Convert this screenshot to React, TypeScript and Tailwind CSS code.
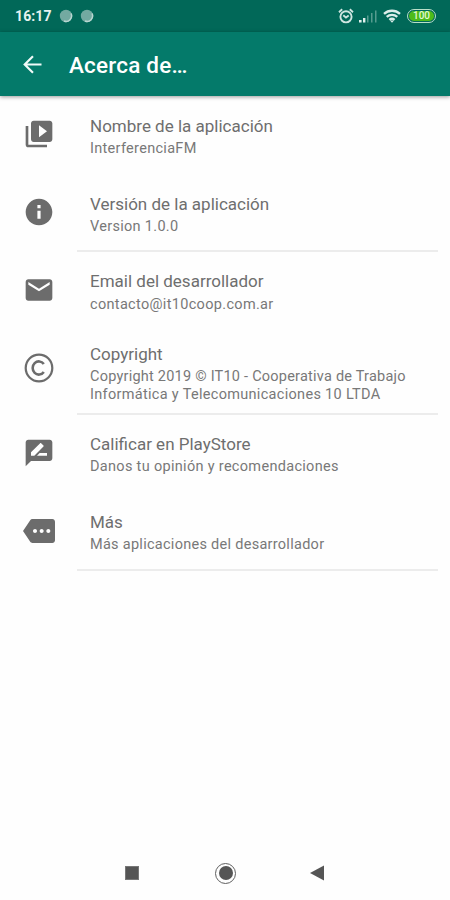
import type { ReactNode } from "react";

const icons = {
  library:
    "M4 6H2v14c0 1.100.9 2 2 2h14v-2H4V6zm16-4H8c-1.100 0-2 .9-2 2v12c0 1.100.9 2 2 2h12c1.100 0 2-.9 2-2V4c0-1.100-.9-2-2-2zm-8 12.500v-9l6 4.500-6 4.500z",
  info: "M12 2C6.480 2 2 6.480 2 12s4.480 10 10 10 10-4.480 10-10S17.520 2 12 2zm1.200 15h-2.400v-6h2.400v6zm0-7.800h-2.400V6.800h2.400v2.400z",
  mail: "M20 4H4c-1.100 0-2 .9-2 2v12c0 1.100.9 2 2 2h16c1.100 0 2-.9 2-2V6c0-1.100-.9-2-2-2zm0 4l-8 5-8-5V6l8 5 8-5v2z",
  review:
    "M20 2H4c-1.100 0-2 .9-2 2v18l4-4h14c1.100 0 2-.9 2-2V4c0-1.100-.9-2-2-2zM6 14v-2.470l6.880-6.880c.2-.2.510-.2.710 0l1.770 1.770c.2.2.2.510 0 .710L8.470 14H6zm12 0h-7.500l2-2H18v2z",
  more: "M22 3H7c-.69 0-1.230.350-1.590.880L0 12l5.410 8.110c.360.530.970.890 1.660.890H22c1.100 0 2-.9 2-2V5c0-1.100-.9-2-2-2zM9 13.500c-.830 0-1.500-.67-1.500-1.500s.67-1.500 1.500-1.500 1.500.67 1.500 1.500-.67 1.500-1.500 1.500zm5 0c-.830 0-1.500-.67-1.500-1.500s.67-1.500 1.500-1.500 1.500.67 1.500 1.500-.67 1.500-1.500 1.500zm5 0c-.830 0-1.500-.67-1.500-1.500s.67-1.500 1.500-1.500 1.500.67 1.500 1.500-.67 1.500-1.500 1.500z",
};

function Glyph({ d }: { d: string }) {
  return (
    <svg viewBox="0 0 24 24" className="block size-8 fill-[#6c6c6c]">
      <path d={d} />
    </svg>
  );
}

function CopyrightGlyph() {
  return (
    <svg viewBox="0 0 32 32" className="block size-8 fill-none stroke-[#6c6c6c]">
      <circle cx="16" cy="16" r="13.3" strokeWidth="2.2" />
      <path d="M20.800 12a6.200 6.600 0 1 0 0 8" strokeWidth="2.600" />
    </svg>
  );
}

type RowProps = {
  icon: ReactNode;
  title: string;
  lines: { text: string; className: string }[];
  className?: string;
  textClass?: string;
  linesClass?: string;
};

function Row({
  icon,
  title,
  lines,
  className = "h-[78px]",
  textClass = "pt-[18px]",
  linesClass = "pt-[3px]",
}: RowProps) {
  return (
    <li className={`flex pl-[23px] ${className}`}>
      <div className="w-[67px] shrink-0 pt-[22px]">{icon}</div>
      <div className={`whitespace-nowrap ${textClass}`}>
        <h2 className="text-[17px] leading-[22px] text-[#6e6e6e]">{title}</h2>
        <div className={`text-[14.500px] leading-[17.500px] text-[#787878] ${linesClass}`}>
          {lines.map((l) => (
            <p key={l.text} className={l.className}>{l.text}</p>
          ))}
        </div>
      </div>
    </li>
  );
}

function Divider() {
  return <li className="-mt-[2px] mr-3 ml-[77px] h-[2px] bg-[#ececec]" />;
}

function NotificationDot() {
  return (
    <svg viewBox="0 0 14 14" className="size-[14px]">
      <circle cx="7" cy="7" r="6.200" fill="#73aaa1" />
      <path d="M12 4.500a5.500 5.500 0 0 1-7 7.500" fill="none" stroke="#b9d6d1" strokeWidth="1.500" />
    </svg>
  );
}

function StatusBar() {
  return (
    <div className="flex h-8 items-center bg-[#016858] pr-[14px] pl-[15px] text-[#e6f3f0]">
      <span className="w-[44px] text-[14px] leading-4 font-bold tracking-[0.1px]">16:17</span>
      <div className="flex gap-[7px]">
        <NotificationDot />
        <NotificationDot />
      </div>
      <div className="ml-auto flex items-center">
        <svg viewBox="0 0 16 16" className="mr-[5px] size-4 fill-none stroke-[#cfe6e1]" strokeWidth="1.900">
          <circle cx="8" cy="8.800" r="5.600" />
          <path d="M1 4.200 4.200 1.300M11.800 1.300 15 4.200M5.300 7.200 8 9.600l2.700-2" />
        </svg>
        <svg viewBox="0 0 18 14" className="mr-[6px] h-[14px] w-[18px]">
          <path d="M0 11h2.600v2.500H0zM4 9h2.400v4.500H4z" fill="#e0f0ed" />
          <path d="M8 6.500h1.500v7H8zM12 4h1.500v9.500H12zM16 1.500h1.500v12H16z" fill="#569c8f" />
        </svg>
        <svg viewBox="0 0 18 14" className="mr-[6px] h-[14px] w-[18px] fill-none stroke-[#dceeea]" strokeWidth="2.300">
          <path d="M1 4.800a12 12 0 0 1 16 0M3.700 7.900a8 8 0 0 1 10.600 0M6.400 10.800a4 4 0 0 1 5.200 0" />
          <path d="M7 11.500 9 13.800l2-2.300z" fill="#dceeea" stroke="none" />
        </svg>
        <div className="flex h-[14px] w-[29px] rounded-full border-[1.500px] border-[#b9dfc9] p-px">
          <div className="flex flex-1 items-center justify-center rounded-full bg-[#4dbb1b] text-[10px] leading-none font-medium text-[#e4f8d5]">
            100
          </div>
        </div>
      </div>
    </div>
  );
}

export default function App() {
  return (
    <div className="flex h-[900px] w-[450px] flex-col bg-[#fefefe] font-[Roboto,sans-serif]">
      <StatusBar />
      <header className="flex h-16 items-center bg-[#047a6a] pl-[23px] text-white shadow-[0_1px_4px_rgba(0,0,0,0.4)]">
        <svg viewBox="0 0 20 20" className="mr-[27px] size-[19px] fill-none stroke-[#f0faf8]" strokeWidth="2.300">
          <path d="M19.500 10H2M10.500 1.300 1.800 10l8.700 8.700" />
        </svg>
        <h1 className="pt-px text-[22.500px] leading-7 font-medium tracking-[0.2px]">Acerca de…</h1>
      </header>
      <ul className="flex flex-col">
        <Row icon={<Glyph d={icons.library} />} title="Nombre de la aplicación"
          textClass="pt-[19px]"
          lines={[{ text: "InterferenciaFM", className: "tracking-[0.3px]" }]} />
        <Row icon={<Glyph d={icons.info} />} title="Versión de la aplicación"
          textClass="pt-[19px]"
          lines={[{ text: "Version 1.0.0", className: "tracking-[0.3px]" }]} />
        <Divider />
        <Row icon={<Glyph d={icons.mail} />} title="Email del desarrollador"
          linesClass="pt-[4px]"
          lines={[{ text: "contacto@it10coop.com.ar", className: "tracking-[0.32px]" }]} />
        <Row icon={<CopyrightGlyph />} title="Copyright"
          className="h-[85px]" textClass="pt-[13px]"
          lines={[
            { text: "Copyright 2019 © IT10 - Cooperativa de Trabajo", className: "tracking-[0.23px]" },
            { text: "Informática y Telecomunicaciones 10 LTDA", className: "tracking-[0.31px]" },
          ]} />
        <Divider />
        <Row icon={<Glyph d={icons.review} />} title="Calificar en PlayStore"
          lines={[{ text: "Danos tu opinión y recomendaciones", className: "tracking-[0.31px]" }]} />
        <Row icon={<Glyph d={icons.more} />} title="Más"
          lines={[{ text: "Más aplicaciones del desarrollador", className: "tracking-[0.28px]" }]} />
        <Divider />
      </ul>
      <nav className="mt-auto flex h-[54px] items-center pl-[125px]">
        <div className="size-[14px] border border-[#777] bg-[#555]" />
        <div className="ml-[76px] flex size-[21px] items-center justify-center rounded-full border-[1.500px] border-[#606060]">
          <div className="size-[14px] rounded-full bg-[#555]" />
        </div>
        <svg viewBox="0 0 14 16" className="ml-[74px] h-4 w-[14px] fill-[#555]">
          <path d="M0 8 14 .5v15z" />
        </svg>
      </nav>
    </div>
  );
}
